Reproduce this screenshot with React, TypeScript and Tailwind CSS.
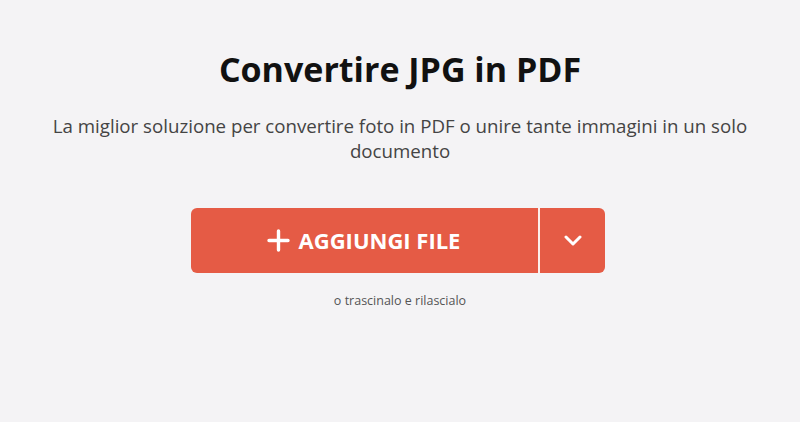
export default function App() {
  return (
    <div
      className="min-h-[422px] w-full bg-[#f4f3f5] flex flex-col items-center pt-[46px]"
      style={{ fontFamily: '"Open Sans", sans-serif' }}
    >
      {/* Heading */}
      <h1 className="text-[34px] leading-[46px] font-bold text-[#111]">Convertire JPG in PDF</h1>
      <p className="mt-[21px] w-[720px] text-center text-[18.7px] leading-[25px] text-[#444]">
        La miglior soluzione per convertire foto in PDF o unire tante immagini in un solo documento
      </p>

      {/* Upload button */}
      <div className="mt-[45px] mr-[4px] flex h-[65px] w-[414px] rounded-[6px] overflow-hidden bg-[#e55b45] text-white">
        <button className="flex flex-1 items-center justify-center gap-[9px] pr-[2px] text-[22px] font-bold">
          <svg width="23" height="23" viewBox="0 0 23 23" fill="none" stroke="currentColor" strokeWidth="3.4" strokeLinecap="round">
            <path d="M11.5 2v19M2 11.5h19" />
          </svg>
          AGGIUNGI FILE
        </button>
        <div className="w-[2px] bg-white/90" />
        <button className="flex w-[65px] items-center justify-center">
          <svg width="18" height="11" viewBox="0 0 18 11" fill="none" stroke="currentColor" strokeWidth="3" strokeLinecap="round" strokeLinejoin="round">
            <path d="M2 2l7 7 7-7" />
          </svg>
        </button>
      </div>

      <p className="mt-[19px] text-[12.5px] text-[#555]">o trascinalo e rilascialo</p>
    </div>
  );
}
